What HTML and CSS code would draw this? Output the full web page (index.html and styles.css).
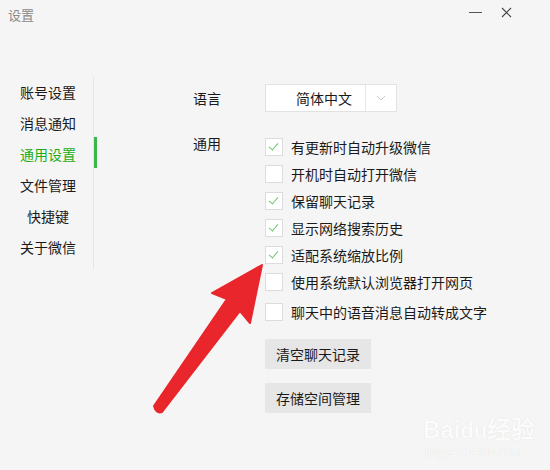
FILE: index.html
```html
<!DOCTYPE html>
<html lang="zh-CN">
<head>
    <meta charset="UTF-8">
    <title>设置</title>
    <link rel="stylesheet" href="styles.css">
</head>
<body>
    <div class="window">
        <header class="titlebar">
            <span class="title">设置</span>
            <div class="controls">
                <span class="btn-min"></span>
                <svg class="btn-close" width="11" height="11" viewBox="0 0 11 11">
                    <path d="M1 1 L10 10 M10 1 L1 10" stroke="#444" stroke-width="1.1" fill="none"/>
                </svg>
            </div>
        </header>

        <div class="content">
            <nav class="sidebar">
                <div class="nav-item">账号设置</div>
                <div class="nav-item">消息通知</div>
                <div class="nav-item active">通用设置</div>
                <div class="nav-item">文件管理</div>
                <div class="nav-item">快捷键</div>
                <div class="nav-item">关于微信</div>
            </nav>

            <main class="main">
                <div class="row">
                    <div class="label">语言</div>
                    <div class="select">
                        <span class="select-value">简体中文</span>
                        <span class="select-arrow">
                            <svg width="10" height="6" viewBox="0 0 10 6">
                                <path d="M1 1 L5 5 L9 1" stroke="#c8c8c8" stroke-width="1" fill="none"/>
                            </svg>
                        </span>
                    </div>
                </div>

                <div class="row group">
                    <div class="label">通用</div>
                    <div class="options">
                        <div class="option"><span class="box checked"></span>有更新时自动升级微信</div>
                        <div class="option"><span class="box"></span>开机时自动打开微信</div>
                        <div class="option"><span class="box checked"></span>保留聊天记录</div>
                        <div class="option"><span class="box checked"></span>显示网络搜索历史</div>
                        <div class="option"><span class="box checked"></span>适配系统缩放比例</div>
                        <div class="option"><span class="box"></span>使用系统默认浏览器打开网页</div>
                        <div class="option last"><span class="box"></span>聊天中的语音消息自动转成文字</div>

                        <div class="buttons">
                            <button class="button">清空聊天记录</button>
                            <button class="button">存储空间管理</button>
                        </div>
                    </div>
                </div>
            </main>
        </div>

        <!-- annotation arrow drawn over the screenshot -->
        <svg class="arrow" width="550" height="470" viewBox="0 0 550 470">
            <path d="M262 265 L212 293 L227 299 L154 406 Q156 414 162 412 L240 311 L250 323 Z"
                  fill="#e9262b" stroke="#e9262b" stroke-width="2" stroke-linejoin="round"/>
        </svg>

        <div class="watermark">
            <div class="wm-logo">Bai<span class="wm-du">du</span>经验</div>
            <div class="wm-url">jingyan.baidu.com</div>
        </div>
    </div>
</body>
</html>
```

FILE: styles.css
```css
body {
    margin: 0;
    background-color: #f5f5f5;
    font-family: "Noto Sans CJK SC", "Noto Sans", sans-serif;
    color: #1a1a1a;
}

.window {
    position: relative;
    width: 550px;
    height: 470px;
    overflow: hidden;
}

.titlebar {
    display: flex;
    justify-content: space-between;
    padding: 7px 0 0 8px;
    height: 30px;
    box-sizing: border-box;
}

.title {
    font-size: 13px;
    line-height: 16px;
    color: #8a8a8a;
}

.controls {
    display: flex;
    align-items: flex-start;
    padding-right: 38px;
}

.btn-min {
    display: block;
    width: 13px;
    height: 1px;
    background-color: #555;
    margin-top: 5px;
    margin-right: 19px;
}

.btn-close {
    display: block;
    margin-top: 0;
}

.content {
    display: flex;
}

.sidebar {
    width: 93px;
    margin-top: 47px;
    padding-top: 0;
    padding-bottom: 6px;
    border-right: 1px solid #e6e6e6;
    align-self: flex-start;
}

.nav-item {
    position: relative;
    height: 31px;
    line-height: 31px;
    font-size: 14px;
    text-align: center;
    padding-left: 3px;
}

.nav-item.active {
    color: #1aad19;
}

.nav-item.active::after {
    content: "";
    position: absolute;
    right: -4px;
    top: -2px;
    width: 3px;
    height: 31px;
    background-color: #3cb54a;
}

.main {
    padding-left: 99px;
    padding-top: 54px;
}

.row {
    display: flex;
}

.label {
    width: 72px;
    font-size: 14px;
    line-height: 28px;
}

.group {
    margin-top: 21px;
}

.group .label {
    line-height: 20px;
    padding-top: 0;
}

.select {
    display: flex;
    width: 130px;
    height: 26px;
    background-color: #fff;
    border: 1px solid #e2e2e2;
}

.select-value {
    width: 100px;
    border-right: 1px solid #e6e6e6;
    font-size: 14px;
    line-height: 26px;
    padding-left: 30px;
    box-sizing: border-box;
}

.select-arrow {
    flex: 1;
    display: flex;
    align-items: center;
    justify-content: center;
}

.option {
    display: flex;
    align-items: center;
    height: 27px;
    font-size: 14px;
}

.option.last {
    margin-top: 3px;
}

.box {
    position: relative;
    width: 16px;
    height: 16px;
    border: 1px solid #dcdcdc;
    background-color: #fff;
    margin-right: 8px;
}

.box.checked::after {
    content: "";
    position: absolute;
    left: 5px;
    top: 2px;
    width: 4px;
    height: 8px;
    border-right: 1px solid #6fc66f;
    border-bottom: 1px solid #6fc66f;
    transform: rotate(40deg);
}

.buttons {
    display: flex;
    flex-direction: column;
    align-items: flex-start;
    gap: 14px;
    margin-top: 14px;
}

.button {
    height: 30px;
    padding: 0 11px;
    border: none;
    background-color: #e6e6e6;
    font-family: "Noto Sans CJK SC", sans-serif;
    font-size: 14px;
    color: #1a1a1a;
}

.arrow {
    position: absolute;
    left: 0;
    top: 0;
}

.watermark {
    position: absolute;
    left: 423px;
    top: 416px;
    color: #fbfbfb;
    text-shadow: 0 0 1px #dcdcdc;
    font-family: "Liberation Sans", sans-serif;
}

.wm-logo {
    font-size: 24px;
    font-weight: bold;
    line-height: 28px;
}

.wm-logo .wm-du {
    font-size: 22px;
}

.wm-url {
    font-size: 12px;
    line-height: 14px;
    padding-left: 2px;
}
```
